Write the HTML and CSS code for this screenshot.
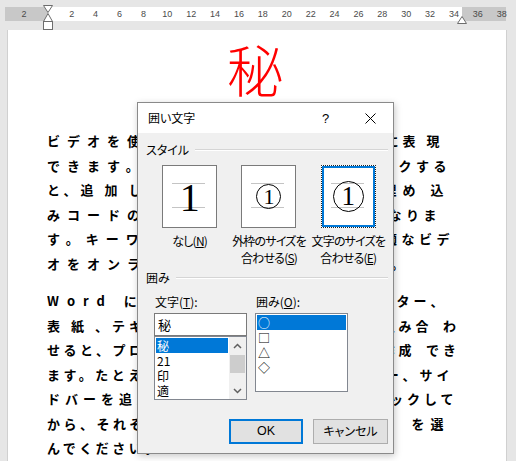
FILE: index.html
```html
<!DOCTYPE html>
<html lang="ja">
<head>
<meta charset="utf-8">
<title>囲い文字</title>
<link rel="stylesheet" href="styles.css">
</head>
<body>
<div class="app">
  <div class="rulerbar">
    <div class="ruler">
      <div class="ticks">
        <span>2</span><span></span><span>2</span><span>4</span><span>6</span><span>8</span><span>10</span><span>12</span><span>14</span><span>16</span><span>18</span><span>20</span><span>22</span><span>24</span><span>26</span><span>28</span><span>30</span><span>32</span><span>34</span><span>36</span><span>38</span>
      </div>
      <svg class="ind-left" width="12" height="26" viewBox="0 0 12 26"><path d="M1.5 .5H10.5L6 7.5Z" fill="#fff" stroke="#6d6d6d"/><path d="M6 8.5L10.5 16.5H1.5Z" fill="#fff" stroke="#6d6d6d"/><rect x="1.5" y="16.5" width="9" height="8" fill="#fff" stroke="#6d6d6d"/></svg>
      <svg class="ind-right" width="10" height="8" viewBox="0 0 10 8"><path d="M5 .5L9.5 7.5H.5Z" fill="#fff" stroke="#6d6d6d"/></svg>
    </div>
  </div>

  <div class="page">
    <div class="title">秘</div>
    <div class="para">
      <div class="ln"><div class="a ls7">ビデオを使うと、伝え</div><div class="b e165"><span class="ls4">たい内容を明確に表 現</span></div></div>
      <div class="ln"><div class="a ls7">できます。[オンライ</div><div class="b e9"><span class="ls45">ン ビデオ] をクリックする</span></div></div>
      <div class="ln"><div class="a ls4">と、追 加 したいビ</div><div class="b e105"><span class="ls6">デオを、それに応じた埋め 込</span></div></div>
      <div class="ln"><div class="a ls7">みコードの形式で貼</div><div class="b e19"><span class="ls45">り付けできるようになりま</span></div></div>
      <div class="ln"><div class="a ls7">す。キーワードを入</div><div class="b e6"><span class="ls45">力して、文書に最適なビデ</span></div></div>
      <div class="ln"><div class="a ls7">オをオンラインで検</div><div class="b e52"><span class="ls4">索することもできます。</span></div></div>
    </div>
    <div class="para">
      <div class="ln"><div class="a ls8">Word に用意されて</div><div class="b e125"><span class="ls4">いるヘッダー、フッター、</span></div></div>
      <div class="ln"><div class="a ls4">表 紙 、テキスト ボッ</div><div class="b e0"><span class="ls4">クス デザインを組み合&#8194;わ</span></div></div>
      <div class="ln"><div class="a ls35">せると、プロのよう</div><div class="b e0"><span class="ls4">なできばえの文書を作成&#8194;でき</span></div></div>
      <div class="ln"><div class="a ls35">ます。たとえば、一致</div><div class="b e65"><span class="ls4">する表紙、ヘッダー、サイ</span></div></div>
      <div class="ln"><div class="a ls5">ドバーを追加できま</div><div class="b e25"><span class="ls4">す。[挿入] をクリックして</span></div></div>
      <div class="ln"><div class="a ls35">から、それぞれのギャ</div><div class="b e105"><span class="ls6">ラリーで目的の要素&#8194;を選</span></div></div>
      <div class="ln"><div class="a ls35">んでください。</div></div>
    </div>
  </div>

  <div class="dlg">
    <div class="dlg-title">
      <span class="dt">囲い文字</span>
      <span class="tb help">?</span>
      <span class="tb"><svg width="11" height="11" viewBox="0 0 11 11"><path d="M.5 .5L10.5 10.5M10.5 .5L.5 10.5" stroke="#000" stroke-width="1"/></svg></span>
    </div>
    <div class="dlg-body">
      <div class="grp"><span>スタイル</span><i class="rule"></i></div>
      <div class="styles">
        <div class="opt">
          <div class="box"><span class="d1">1</span></div>
          <div class="lbl">なし(<u>N</u>)</div>
        </div>
        <div class="opt">
          <div class="box"><span class="circ c2">1</span></div>
          <div class="lbl">外枠のサイズを<br>合わせる(<u>S</u>)</div>
        </div>
        <div class="opt">
          <div class="box focus"><span class="circ c3">1</span></div>
          <div class="lbl">文字のサイズを<br>合わせる(<u>E</u>)</div>
        </div>
      </div>
      <div class="grp grp2"><span>囲み</span><i class="rule"></i></div>
      <div class="cols">
        <div class="col">
          <div class="clbl">文字(<u>T</u>):</div>
          <div class="input">秘</div>
          <div class="list list1">
            <div class="items">
              <div class="it sel">秘</div>
              <div class="it">21</div>
              <div class="it">印</div>
              <div class="it">適</div>
            </div>
            <div class="sb">
              <div class="arrow"><svg width="9" height="6" viewBox="0 0 9 6"><path d="M1 5L4.5 1.5L8 5" fill="none" stroke="#606060" stroke-width="1.5"/></svg></div>
              <div class="thumb"></div>
              <div class="track"></div>
              <div class="arrow"><svg width="9" height="6" viewBox="0 0 9 6"><path d="M1 1L4.5 4.5L8 1" fill="none" stroke="#606060" stroke-width="1.5"/></svg></div>
            </div>
          </div>
        </div>
        <div class="col">
          <div class="clbl">囲み(<u>O</u>):</div>
          <div class="list list2">
            <div class="items">
              <div class="it sel">○</div>
              <div class="it">□</div>
              <div class="it">△</div>
              <div class="it">◇</div>
            </div>
          </div>
        </div>
      </div>
      <div class="btns">
        <div class="btn ok">OK</div>
        <div class="btn">キャンセル</div>
      </div>
    </div>
  </div>
</div>
</body>
</html>
```

FILE: styles.css
```css
* { box-sizing: border-box; }
html, body { margin: 0; padding: 0; }
body {
  background: #e6e6e6;
  font-family: "Noto Sans CJK JP", "Noto Sans", sans-serif;
  width: 516px;
  height: 461px;
  overflow: hidden;
}
.app { position: relative; width: 516px; height: 461px; overflow: hidden; }

/* ruler */
.rulerbar { height: 30px; padding: 7px 0 0 5px; }
.ruler {
  position: relative;
  width: 501px;
  height: 14px;
  background: linear-gradient(to right, #c8c8c8 0, #c8c8c8 43px, #fff 43px, #fff 457px, #c8c8c8 457px);
}
.ticks {
  display: flex;
  padding-left: 7px;
  font: 9px/14px "Liberation Sans", Arial, sans-serif;
  color: #4a4a4a;
}
.ticks span { flex: 0 0 23.9px; text-align: center; }
.ind-left { position: absolute; left: 37px; top: -2px; }
.ind-right { position: absolute; left: 452px; top: 9px; }

/* page */
.page {
  margin-left: 7px;
  width: 500px;
  height: 431px;
  background: #fff;
  border-left: 1px solid #d0d0d0;
  border-right: 1px solid #d0d0d0;
  padding: 6px 46px 0 39px;
}
.title {
  font-size: 56px;
  line-height: 64px;
  font-weight: 300;
  color: #ff0000;
  text-align: center;
  padding-left: 3px;
  margin-bottom: 29px;
}
.para { font-size: 13px; font-weight: 700; color: #000; }
.para + .para { margin-top: 13px; }
.ln { display: flex; height: 24.5px; line-height: 24.5px; white-space: nowrap; }
.a { flex: 1 1 0; min-width: 0; overflow: hidden; }
.b { flex: 1 1 0; min-width: 0; overflow: hidden; direction: rtl; }
.b span { display: inline-block; direction: ltr; unicode-bidi: isolate; white-space: nowrap; }

.ls35 { letter-spacing: 3.5px; }
.ls4 { letter-spacing: 4px; }
.ls45 { letter-spacing: 4.5px; }
.ls5 { letter-spacing: 5px; }
.ls6 { letter-spacing: 6px; }
.ls7 { letter-spacing: 7px; }
.ls8 { letter-spacing: 8px; }

.e0 { padding-right: 0; }
.e25 { padding-right: 2.5px; }
.e6 { padding-right: 6px; }
.e65 { padding-right: 6.5px; }
.e9 { padding-right: 9px; }
.e105 { padding-right: 10.5px; }
.e125 { padding-right: 12.5px; }
.e165 { padding-right: 16.5px; }
.e19 { padding-right: 19px; }
.e52 { padding-right: 52px; }

/* dialog */
.dlg {
  position: absolute;
  left: 137px;
  top: 102px;
  width: 257px;
  height: 352px;
  border: 1px solid #8a8a8a;
  background: #f0f0f0;
  box-shadow: 1px 2px 7px rgba(0, 0, 0, 0.22);
  font: 12px/1.4 "Noto Sans CJK JP", sans-serif;
  font-feature-settings: "palt";
  color: #000;
}
.dlg-title {
  height: 30px;
  background: #fff;
  display: flex;
  align-items: center;
  padding-left: 10px;
}
.dt { flex: 1; }
.tb {
  width: 45px;
  height: 30px;
  display: flex;
  align-items: center;
  justify-content: center;
}
.help { font: 13px "Liberation Sans", Arial, sans-serif; }
.dlg-body { padding: 0 5px 0 8px; }
.grp { display: flex; align-items: center; height: 16px; margin-top: 9px; gap: 6px; }
.grp2 { margin-top: 4.5px; }
.rule { flex: 1; height: 2px; border-top: 1px solid #d5d5d5; border-bottom: 1px solid #fff; }

.styles { display: flex; margin: 7px 0 0 4px; }
.opt { width: 81px; display: flex; flex-direction: column; align-items: center; }
.box {
  width: 55px;
  height: 63px;
  border: 1px solid #7a7a7a;
  display: flex;
  align-items: center;
  justify-content: center;
  background:
    linear-gradient(#c4c4c4, #c4c4c4) 9px 17px / 33px 1px no-repeat,
    linear-gradient(#c4c4c4, #c4c4c4) 9px 41px / 33px 1px no-repeat,
    #fff;
}
.box.focus { border: 1px dotted #222; box-shadow: inset 0 0 0 2px #0078d7; }
.d1 { font: 40px/40px "Liberation Serif", serif; padding-top: 3px; }
.circ {
  border: 1px solid #000;
  border-radius: 50%;
  display: flex;
  align-items: center;
  justify-content: center;
  font-family: "Liberation Serif", serif;
  line-height: 1;
}
.c2 { width: 25px; height: 25px; font-size: 22px; }
.c3 { width: 31px; height: 31px; font-size: 27px; }
.lbl {
  margin-top: 3.5px;
  line-height: 17px;
  text-align: center;
  white-space: nowrap;
  letter-spacing: -0.8px;
}

.cols { display: flex; gap: 8px; margin: 8px 0 0 8px; }
.col { width: 93px; }
.clbl { height: 16px; line-height: 16px; padding-left: 1px; margin-bottom: 3px; }
.input {
  height: 23px;
  border: 1px solid #7a7a7a;
  background: #fff;
  padding-left: 3px;
  font-size: 13px;
  line-height: 21px;
}
.list { border: 1px solid #828790; background: #fff; display: flex; }
.list1 { height: 64px; }
.list2 { height: 79px; }
.items { flex: 1; padding: 1px; }
.it { height: 15px; line-height: 15px; padding-left: 1px; white-space: nowrap; }
.it.sel { background: #0078d7; color: #fff; }
.sb { width: 17px; background: #f0f0f0; display: flex; flex-direction: column; }
.arrow { height: 17px; display: flex; align-items: center; justify-content: center; }
.thumb { height: 18px; margin: 1px 1px 0; background: #cdcdcd; }
.track { flex: 1; }

.btns { display: flex; justify-content: flex-end; gap: 10px; margin-top: 19px; }
.btn {
  width: 75px;
  height: 25px;
  background: #e1e1e1;
  border: 1px solid #adadad;
  display: flex;
  align-items: center;
  justify-content: center;
}
.btn.ok { width: 74px; border: 2px solid #0078d7; font-family: "Liberation Sans", Arial, sans-serif; font-size: 12.5px; }
```
